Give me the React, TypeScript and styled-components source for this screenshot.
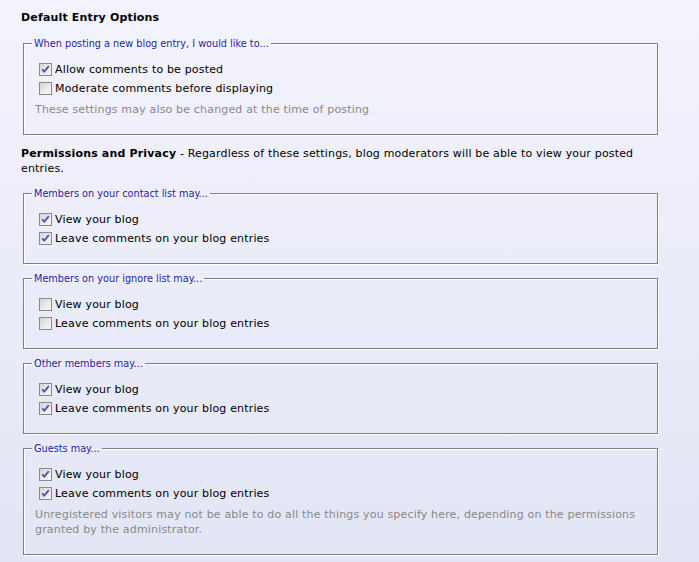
import styled, { createGlobalStyle } from 'styled-components'

const GlobalStyle = createGlobalStyle`
  html, body {
    margin: 0;
    padding: 0;
  }

  body {
    min-height: 100vh;
    background: linear-gradient(to bottom, #f3f3fd 0%, #e2e5f4 100%);
    font-family: 'DejaVu Sans', Verdana, sans-serif;
    font-size: 11px;
    letter-spacing: 0.17px;
    color: #000000;
  }
`

const Page = styled.div`
  padding: 10px 39px 8px 21px;
`

const Heading = styled.div`
  font-weight: bold;
  line-height: 15px;
  margin-bottom: 11px;
`

const Intro = styled.div`
  line-height: 15px;
  margin: 11px 0 10px;

  strong {
    font-weight: bold;
  }
`

const Group = styled.fieldset`
  margin: 0 2px 7px;
  padding: 9px 11px 15px;
  border: 1px solid #808080;
  box-shadow: 1px 1px 0 #ffffff, inset 1px 1px 0 #ffffff;
  min-width: 0;
`

const Legend = styled.legend`
  font-family: 'DejaVu Sans Condensed', Tahoma, sans-serif;
  font-size: 10.8px;
  letter-spacing: 0;
  line-height: 15px;
  color: #2424a8;
  padding: 0 2px;
  margin-left: -3px;
`

const Row = styled.label`
  display: flex;
  align-items: center;
  height: 19px;
  padding-left: 4px;
`

const Box = styled.span<{ checked: boolean }>`
  width: 13px;
  height: 13px;
  box-sizing: border-box;
  margin-right: 3px;
  border: 1px solid #8a8a8a;
  background: linear-gradient(135deg, #d4d4d4 0%, #ececec 60%, #f7f7f7 100%);
  display: flex;
  align-items: center;
  justify-content: center;
  flex: 0 0 auto;
`

const Note = styled.div`
  color: #888888;
  line-height: 15px;
  margin: 4px 0 2px;
`

const Check = ({ checked }: { checked: boolean }) => (
  <Box checked={checked}>
    {checked && (
      <svg width="9" height="9" viewBox="0 0 9 9">
        <path
          d="M1.2 4.3 L3.3 6.6 L7.8 1.2"
          fill="none"
          stroke="#4b56b0"
          strokeWidth="1.9"
        />
      </svg>
    )}
  </Box>
)

interface Option {
  label: string
  checked: boolean
}

interface Section {
  legend: string
  options: Option[]
  note?: string
}

const blogOptions = (view: boolean, comment: boolean): Option[] => [
  { label: 'View your blog', checked: view },
  { label: 'Leave comments on your blog entries', checked: comment },
]

const sections: Section[] = [
  {
    legend: 'Members on your contact list may...',
    options: blogOptions(true, true),
  },
  {
    legend: 'Members on your ignore list may...',
    options: blogOptions(false, false),
  },
  {
    legend: 'Other members may...',
    options: blogOptions(true, true),
  },
  {
    legend: 'Guests may...',
    options: blogOptions(true, true),
    note: 'Unregistered visitors may not be able to do all the things you specify here, depending on the permissions granted by the administrator.',
  },
]

const OptionGroup = ({ legend, options, note }: Section) => (
  <Group>
    <Legend>{legend}</Legend>
    {options.map((option) => (
      <Row key={option.label}>
        <Check checked={option.checked} />
        {option.label}
      </Row>
    ))}
    {note && <Note>{note}</Note>}
  </Group>
)

export default function App() {
  return (
    <>
      <GlobalStyle />
      <Page>
        <Heading>Default Entry Options</Heading>
        <OptionGroup
          legend="When posting a new blog entry, I would like to..."
          options={[
            { label: 'Allow comments to be posted', checked: true },
            { label: 'Moderate comments before displaying', checked: false },
          ]}
          note="These settings may also be changed at the time of posting"
        />
        <Intro>
          <strong>Permissions and Privacy</strong> - Regardless of these
          settings, blog moderators will be able to view your posted entries.
        </Intro>
        {sections.map((section) => (
          <OptionGroup key={section.legend} {...section} />
        ))}
      </Page>
    </>
  )
}
